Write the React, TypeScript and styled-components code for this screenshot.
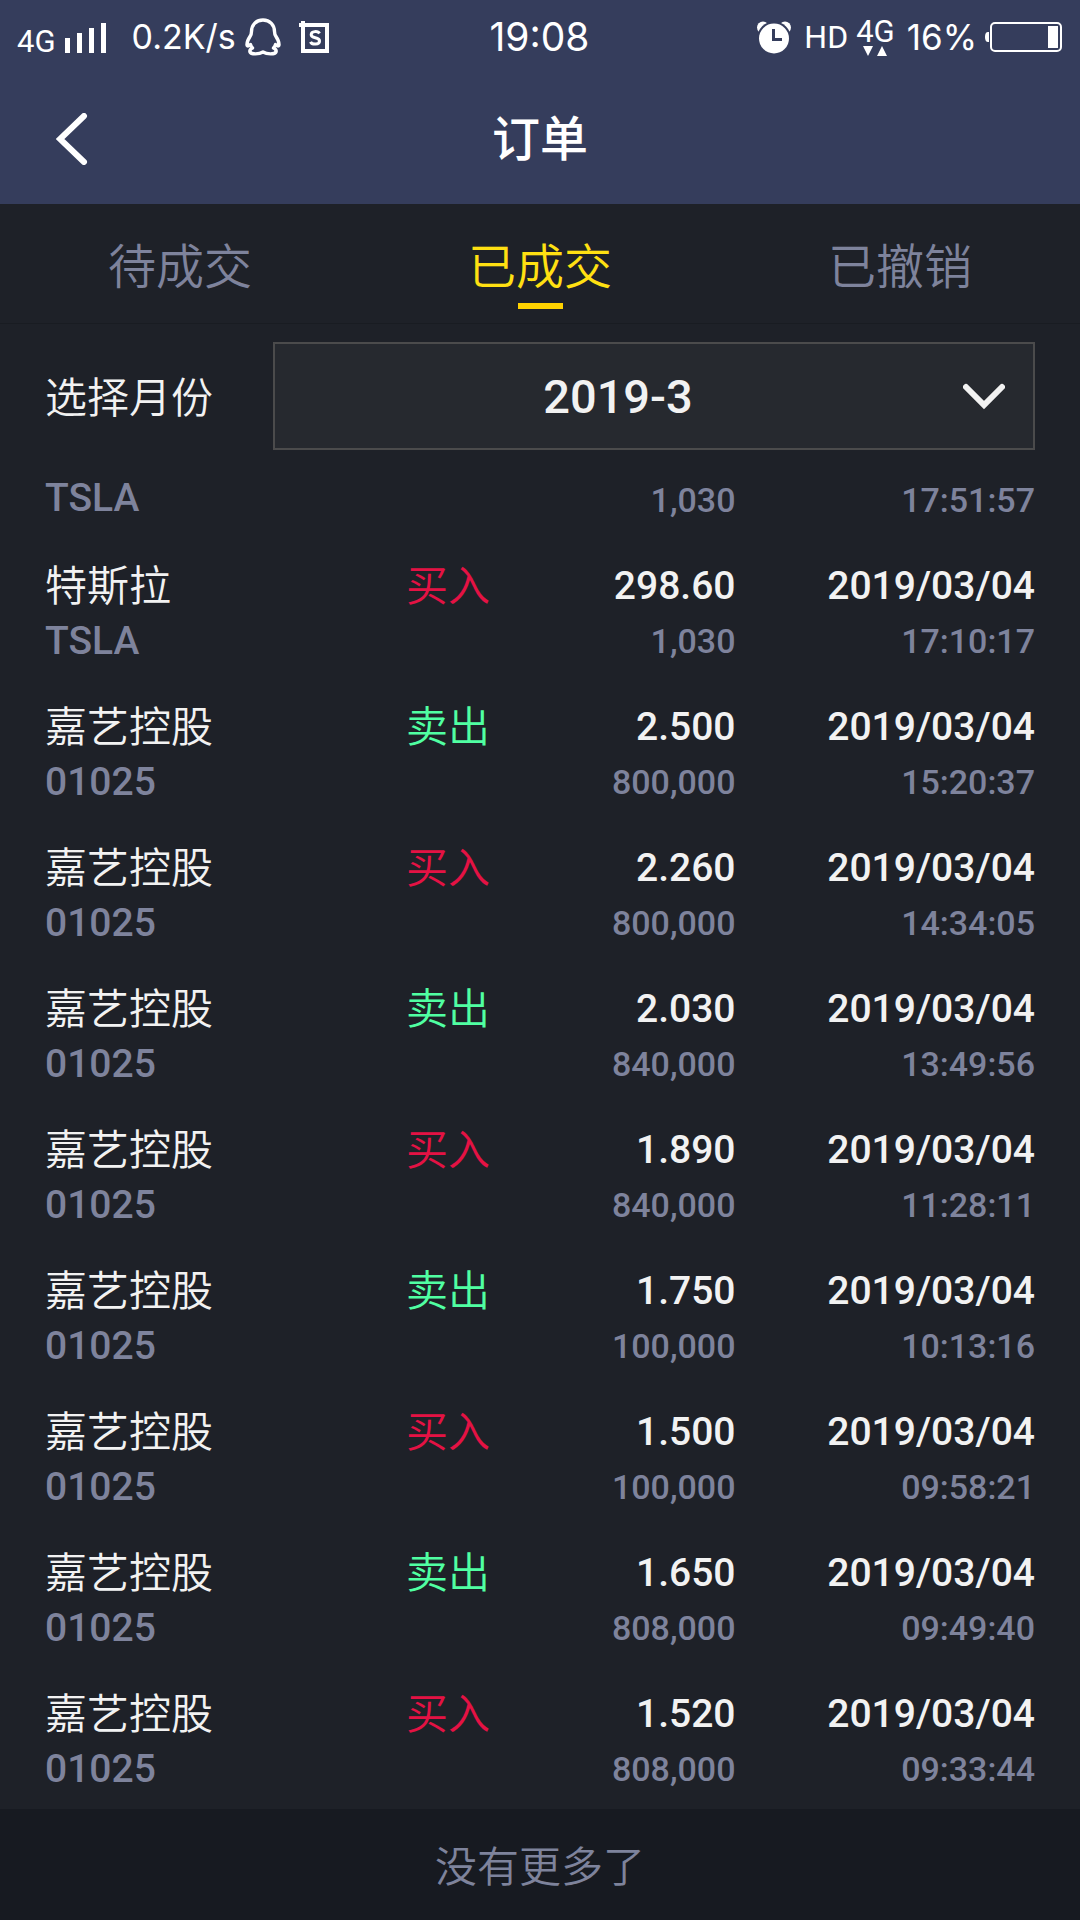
import React, { useState } from "react";
import styled, { createGlobalStyle } from "styled-components";

const colors = {
  header: "#353d5c",
  page: "#1e2128",
  field: "#26292f",
  fieldBorder: "#4b4b4c",
  footer: "#171a21",
  divider: "#191c22",
  text: "#f2f2f2",
  muted: "#7e839c",
  accent: "#ffe012",
  accentBar: "#ffd200",
  buy: "#e41244",
  sell: "#50ffa2",
};

const GlobalStyle = createGlobalStyle`
  * { box-sizing: border-box; }
  body {
    margin: 0;
    background: ${colors.page};
    color: ${colors.text};
    font-family: Roboto, "Noto Sans CJK SC", sans-serif;
  }
  button, select { font: inherit; }
`;

const Screen = styled.div`
  display: flex;
  flex-direction: column;
  min-height: 100vh;
`;

const Header = styled.header`
  background: ${colors.header};
  color: #fff;
`;

const StatusBar = styled.div`
  display: grid;
  grid-template-columns: 1fr auto 1fr;
  align-items: center;
  height: 74px;
  padding: 0 18px 0 17px;
`;

const StatusGroup = styled.div<{ $end?: boolean }>`
  display: flex;
  align-items: center;
  justify-content: ${(p) => (p.$end ? "flex-end" : "flex-start")};
`;

const StatusText = styled.span<{ $size: number; $left?: number }>`
  font-family: Inter, Roboto, sans-serif;
  font-size: ${(p) => p.$size}px;
  line-height: 40px;
  margin-left: ${(p) => p.$left ?? 0}px;
  white-space: nowrap;
`;

const Network = styled.span`
  font-size: 31px;
  line-height: 32px;
  padding-top: 10px;
`;

const HdText = styled.span`
  font-size: 32px;
  line-height: 40px;
  margin-left: 13px;
`;

const Traffic = styled.span`
  display: flex;
  flex-direction: column;
  align-items: center;
  margin-left: 8px;
  font-size: 31px;
  line-height: 28px;
`;

const Icon = styled.svg<{ $left?: number }>`
  display: block;
  flex: none;
  margin-left: ${(p) => p.$left ?? 0}px;
`;

const TitleBar = styled.div`
  display: grid;
  grid-template-columns: 1fr auto 1fr;
  align-items: center;
  height: 130px;
  padding: 0 40px;
`;

const BackButton = styled.button`
  justify-self: start;
  padding: 8px 16px;
  border: 0;
  background: none;
  color: inherit;
`;

const Title = styled.h1`
  margin: 0;
  padding-top: 2px;
  font-size: 48px;
  line-height: 60px;
  font-weight: 500;
`;

const Tabs = styled.nav`
  display: grid;
  grid-template-columns: repeat(3, 1fr);
  height: 120px;
  border-bottom: 1px solid ${colors.divider};
`;

const Tab = styled.button<{ $active: boolean }>`
  display: flex;
  flex-direction: column;
  align-items: center;
  gap: 5px;
  padding: 34px 0 0;
  border: 0;
  background: none;
  font-size: 48px;
  line-height: 60px;
  font-weight: 350;
  color: ${(p) => (p.$active ? colors.accent : colors.muted)};

  &::after {
    content: "";
    width: 45px;
    height: 6px;
    background: ${(p) => (p.$active ? colors.accentBar : "transparent")};
  }
`;

const Filter = styled.div`
  display: flex;
  align-items: center;
  padding: 18px 45px 10px;
`;

const FilterLabel = styled.label`
  flex: none;
  width: 228px;
  padding-top: 6px;
  font-size: 42px;
  line-height: 50px;
  font-weight: 350;
`;

const SelectBox = styled.div`
  position: relative;
  flex: 1;
`;

const MonthSelect = styled.select`
  display: block;
  width: 100%;
  height: 108px;
  padding: 0 72px 0 0;
  border: 2px solid ${colors.fieldBorder};
  border-radius: 0;
  appearance: none;
  background: ${colors.field};
  color: ${colors.text};
  font-size: 47px;
  font-weight: 500;
  text-align: center;
  text-align-last: center;
`;

const SelectArrow = styled.svg`
  position: absolute;
  top: 41px;
  right: 30px;
  pointer-events: none;
`;

const Orders = styled.table`
  width: 100%;
  border-collapse: collapse;
  table-layout: fixed;
`;

const Cell = styled.td<{ $align?: "right"; $tail?: boolean }>`
  height: ${(p) => (p.$tail ? 80 : 141)}px;
  padding: ${(p) => (p.$tail ? 11 : 20)}px 0 0;
  vertical-align: top;
  text-align: ${(p) => p.$align ?? "left"};
  white-space: nowrap;

  &:first-child { padding-left: 45px; }
  &:last-child { padding-right: 45px; }
`;

const Name = styled.div`
  font-size: 42px;
  line-height: 54px;
  font-weight: 350;
`;

const Side = styled(Name)<{ $side: Side }>`
  color: ${(p) => (p.$side === "买入" ? colors.buy : colors.sell)};
`;

const Value = styled.div`
  font-size: 39px;
  line-height: 52px;
  font-weight: 500;
`;

const Code = styled.div`
  font-size: 39px;
  line-height: 54px;
  font-weight: 500;
  color: ${colors.muted};
`;

const Detail = styled(Code)`
  font-size: 34px;
  line-height: 58px;
`;

const Footer = styled.footer`
  flex: 1;
  padding: 33px 0 27px;
  background: ${colors.footer};
  color: ${colors.muted};
  font-size: 42px;
  line-height: 51px;
  font-weight: 350;
  text-align: center;
`;

type Side = "买入" | "卖出";

interface Order {
  code: string;
  amount: string;
  time: string;
  name?: string;
  side?: Side;
  price?: string;
  date?: string;
}

const jiayi = (side: Side, price: string, amount: string, time: string): Order => ({
  name: "嘉艺控股",
  code: "01025",
  side,
  price,
  amount,
  date: "2019/03/04",
  time,
});

const orders: Order[] = [
  { code: "TSLA", amount: "1,030", time: "17:51:57" },
  {
    name: "特斯拉",
    code: "TSLA",
    side: "买入",
    price: "298.60",
    amount: "1,030",
    date: "2019/03/04",
    time: "17:10:17",
  },
  jiayi("卖出", "2.500", "800,000", "15:20:37"),
  jiayi("买入", "2.260", "800,000", "14:34:05"),
  jiayi("卖出", "2.030", "840,000", "13:49:56"),
  jiayi("买入", "1.890", "840,000", "11:28:11"),
  jiayi("卖出", "1.750", "100,000", "10:13:16"),
  jiayi("买入", "1.500", "100,000", "09:58:21"),
  jiayi("卖出", "1.650", "808,000", "09:49:40"),
  jiayi("买入", "1.520", "808,000", "09:33:44"),
];

const tabs = ["待成交", "已成交", "已撤销"];

function OrderRow({ order }: { order: Order }) {
  const tail = !order.name;
  return (
    <tr>
      <Cell $tail={tail}>
        {order.name && <Name>{order.name}</Name>}
        <Code>{order.code}</Code>
      </Cell>
      <Cell $tail={tail}>{order.side && <Side $side={order.side}>{order.side}</Side>}</Cell>
      <Cell $tail={tail} $align="right">
        {order.price && <Value>{order.price}</Value>}
        <Detail>{order.amount}</Detail>
      </Cell>
      <Cell $tail={tail} $align="right">
        {order.date && <Value>{order.date}</Value>}
        <Detail>{order.time}</Detail>
      </Cell>
    </tr>
  );
}

function Status() {
  return (
    <StatusBar>
      <StatusGroup>
        <Network>4G</Network>
        <Icon $left={9} width="42" height="32" viewBox="0 0 42 32" fill="#fff">
          <path d="M0 17h5v15H0zM12 12h5v20h-5zM24 7h5v25h-5zM36 2h5v30h-5z" />
        </Icon>
        <StatusText $size={34} $left={25}>0.2K/s</StatusText>
        <Icon $left={9} width="36" height="38" viewBox="0 0 36 38" fill="none" stroke="#fff" strokeWidth="3.4" strokeLinejoin="round" strokeLinecap="round">
          <path d="M18 2C11 2 6.500 7 6.500 13.500C6.500 16 6 17 5 18.500C3 21.500 1.800 24.500 2 27C2.300 28.600 4 28 5.500 26.500C6 28 6.500 29 7.500 30C5.500 31 4.500 32.500 5 34C6 36.500 14 36.500 18 34C22 36.500 30 36.500 31 34C31.500 32.500 30.500 31 28.500 30C29.500 29 30 28 30.500 26.500C32 28 33.700 28.600 34 27C34.200 24.500 33 21.500 31 18.500C30 17 29.500 16 29.500 13.500C29.500 7 25 2 18 2Z" />
        </Icon>
        <Icon $left={18} width="30" height="33" viewBox="0 0 30 33" fill="none" stroke="#fff">
          <path d="M0 4H28V30H4V0" strokeWidth="4" />
          <path d="M20.500 12.500C19 9.800 12.200 9.800 12.200 13.700C12.200 18 20.500 15.500 20.500 20C20.500 24 13 24 11.500 20.800" strokeWidth="3" />
        </Icon>
      </StatusGroup>
      <StatusText $size={39}>19:08</StatusText>
      <StatusGroup $end>
        <Icon width="34" height="33" viewBox="0 0 34 33">
          <circle cx="6" cy="6.500" r="6" fill="#fff" />
          <circle cx="28" cy="6.500" r="6" fill="#fff" />
          <circle cx="17" cy="17.500" r="17" fill={colors.header} />
          <circle cx="17" cy="17.500" r="15" fill="#fff" />
          <path d="M16.500 8V18.500H25" fill="none" stroke={colors.header} strokeWidth="3" />
        </Icon>
        <HdText>HD</HdText>
        <Traffic>
          4G
          <Icon width="24" height="10" viewBox="0 0 24 10" fill="#fff">
            <path d="M0 0H10L5 10ZM14 10H24L19 0Z" />
          </Icon>
        </Traffic>
        <StatusText $size={35} $left={12}>16%</StatusText>
        <Icon $left={8} width="77" height="30" viewBox="0 0 77 30">
          <path d="M4 10H3Q0 10 0 15T3 20H4Z" fill="#fff" />
          <rect x="6" y="1" width="70" height="28" rx="4" fill="none" stroke="#fff" strokeWidth="2" />
          <rect x="63" y="4" width="10" height="22" fill="#fff" />
        </Icon>
      </StatusGroup>
    </StatusBar>
  );
}

export default function App() {
  const [active, setActive] = useState(1);
  return (
    <>
      <GlobalStyle />
      <Screen>
        <Header>
          <Status />
          <TitleBar>
            <BackButton aria-label="返回">
              <Icon width="32" height="52" viewBox="0 0 32 52" fill="none" stroke="#fff" strokeWidth="6" strokeLinecap="round">
                <path d="M28 3L4 26L28 49" />
              </Icon>
            </BackButton>
            <Title>订单</Title>
          </TitleBar>
        </Header>
        <Tabs>
          {tabs.map((label, i) => (
            <Tab key={label} $active={i === active} onClick={() => setActive(i)}>
              {label}
            </Tab>
          ))}
        </Tabs>
        <Filter>
          <FilterLabel htmlFor="month">选择月份</FilterLabel>
          <SelectBox>
            <MonthSelect id="month">
              <option>2019-3</option>
            </MonthSelect>
            <SelectArrow width="42" height="28" viewBox="0 0 42 28" fill="none" stroke={colors.text} strokeWidth="6" strokeLinecap="round">
              <path d="M3 4L21 22L39 4" />
            </SelectArrow>
          </SelectBox>
        </Filter>
        <Orders>
          <colgroup>
            <col style={{ width: "37.6%" }} />
            <col style={{ width: "13%" }} />
            <col style={{ width: "17.5%" }} />
            <col />
          </colgroup>
          <tbody>
            {orders.map((order) => (
              <OrderRow key={order.time} order={order} />
            ))}
          </tbody>
        </Orders>
        <Footer>没有更多了</Footer>
      </Screen>
    </>
  );
}
